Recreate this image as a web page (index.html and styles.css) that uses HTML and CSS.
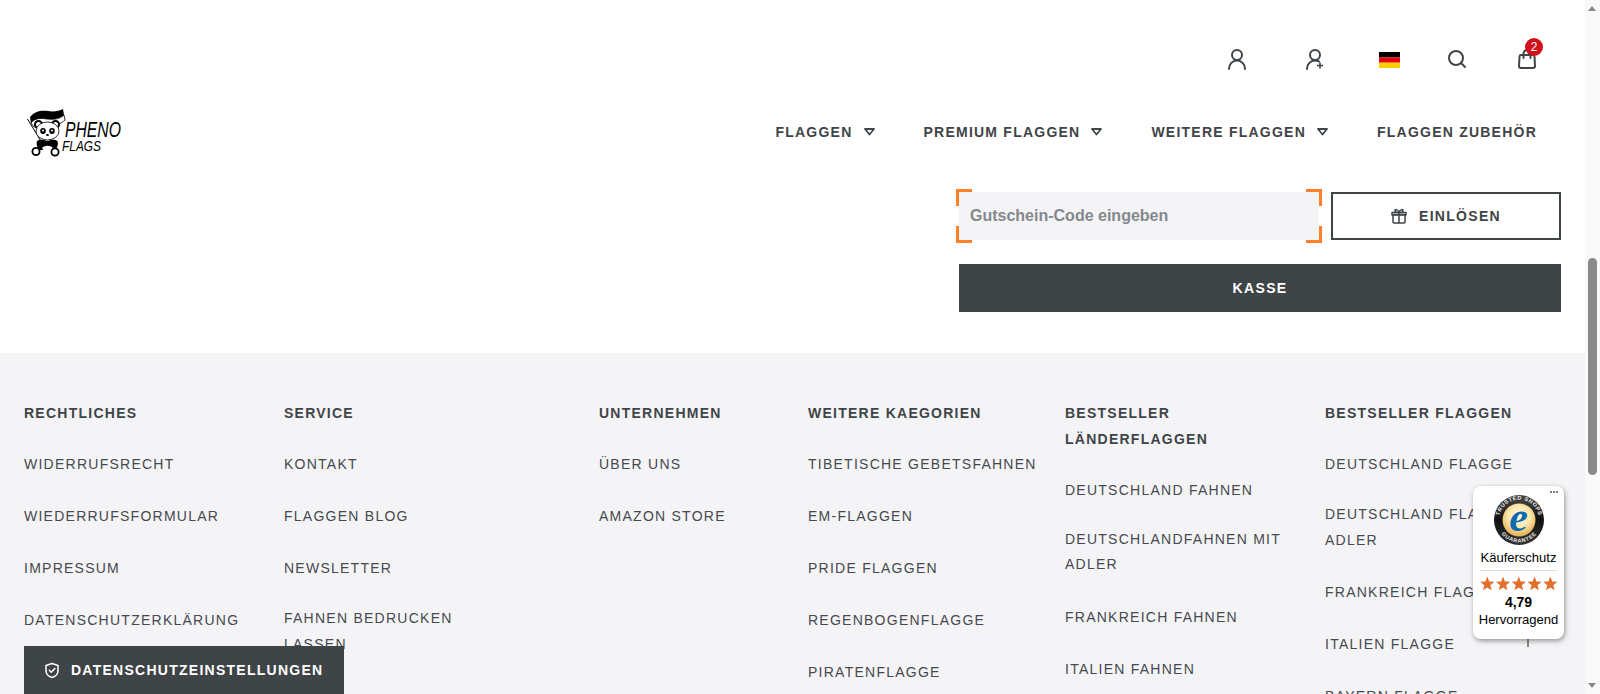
FILE: index.html
```html
<!DOCTYPE html>
<html lang="de">
<head>
<meta charset="utf-8">
<title>Warenkorb – Pheno Flags</title>
<link rel="stylesheet" href="styles.css">
</head>
<body>
<div class="app">
  <div class="page">
    <header class="header">
      <div class="toolbar">
        <a class="tool t1"><svg width="18" height="20" viewBox="0 0 18 20" class="ico"><circle cx="9" cy="6" r="5"/><path d="M1 20c0-5 3.500-8.500 8-8.500s8 3.500 8 8.500"/></svg></a>
        <a class="tool t2"><svg width="18" height="20" viewBox="0 0 18 20" class="ico"><circle cx="9" cy="6" r="5"/><path d="M1 20c0-5 3.500-8.500 8-8.500 1.500 0 2.800.4 4 1"/><path d="M14 13.500v6M11 16.500h6" class="thin"/></svg></a>
        <a class="tool t3"><svg width="21" height="16" viewBox="0 0 21 16" class="flag"><rect width="21" height="5.400" fill="#000"/><rect y="5.300" width="21" height="5.400" fill="#e30613"/><rect y="10.700" width="21" height="5.300" fill="#ffce00"/></svg></a>
        <a class="tool t4"><svg width="18" height="18" viewBox="0 0 18 18" class="ico"><circle cx="8" cy="8" r="7"/><path d="M13 13l4 4"/></svg></a>
        <a class="tool t5"><svg width="18" height="20" viewBox="0 0 18 20" class="ico"><path d="M3 6h12c1 0 1.400.6 1.500 1.500l.5 9.500c0 1.300-.7 2-2 2H3c-1.300 0-2-.7-2-2l.5-9.500C1.600 6.600 2 6 3 6z"/><path d="M5.500 9V5c0-2.300 1.400-4 3.500-4s3.500 1.700 3.500 4v4"/></svg><span class="badge">2</span></a>
      </div>
      <div class="navrow">
        <a class="logo">
          <svg width="94" height="50" viewBox="27 108 94 50">
            <path d="M30 117c5-6 11-7 18-6 6 1 11 0 15-2l1 6c-4 4-10 5-17 4-7-1-12 0-16 5z" fill="#000"/>
            <path d="M31 123c4-5 9-5 16-4 7 1 13 0 17-4l1 5c-4 4-9 5-15 5l-16 2z" fill="#fff" stroke="#000" stroke-width=".8"/>
            <path d="M27.500 119l14 23" stroke="#000" stroke-width="1"/>
            <circle cx="38.500" cy="124.500" r="3.500" fill="#fff" stroke="#000" stroke-width="2"/>
            <circle cx="55.500" cy="124.500" r="3.500" fill="#fff" stroke="#000" stroke-width="2"/>
            <ellipse cx="47.500" cy="131" rx="11.500" ry="9" fill="#fff" stroke="#000" stroke-width=".8"/>
            <ellipse cx="43" cy="131" rx="2.800" ry="3" fill="#000"/>
            <ellipse cx="52" cy="131" rx="2.800" ry="3" fill="#000"/>
            <circle cx="43" cy="130.500" r="1" fill="#fff"/>
            <circle cx="52" cy="130.500" r="1" fill="#fff"/>
            <ellipse cx="47.500" cy="135" rx="1.500" ry="1" fill="#000"/>
            <path d="M37 141c3-2 6-1 10.500 0 4-1 7-2 10 0 1 3 0 7-3 9H40c-3-2-4-6-3-9z" fill="#000"/>
            <path d="M42 148c3-3 8-3 11 0l-2 3h-7z" fill="#fff"/>
            <circle cx="36" cy="151.500" r="3.600" fill="#fff" stroke="#000" stroke-width="1.800"/>
            <circle cx="55" cy="152" r="3.600" fill="#fff" stroke="#000" stroke-width="1.800"/>
            <text x="65" y="137" class="logo-a" textLength="56" lengthAdjust="spacingAndGlyphs">PHENO</text>
            <text x="62" y="151" class="logo-b" textLength="39" lengthAdjust="spacingAndGlyphs">FLAGS</text>
          </svg>
        </a>
        <nav class="nav">
          <a class="navlink">FLAGGEN<svg class="caret" width="11" height="8" viewBox="0 0 11 8"><path d="M1 1h9L5.500 6.500z"/></svg></a>
          <a class="navlink">PREMIUM FLAGGEN<svg class="caret" width="11" height="8" viewBox="0 0 11 8"><path d="M1 1h9L5.500 6.500z"/></svg></a>
          <a class="navlink">WEITERE FLAGGEN<svg class="caret" width="11" height="8" viewBox="0 0 11 8"><path d="M1 1h9L5.500 6.500z"/></svg></a>
          <a class="navlink">FLAGGEN ZUBEHÖR</a>
        </nav>
      </div>
    </header>

    <main class="cart">
      <div class="cart-actions">
        <div class="coupon">
          <div class="coupon-field">
            <span class="corner tl"></span><span class="corner tr"></span><span class="corner bl"></span><span class="corner br"></span>
            <input class="coupon-input" type="text" placeholder="Gutschein-Code eingeben">
          </div>
          <button class="btn-outline" type="button">
            <svg width="16" height="16" viewBox="0 0 16 16" class="gift"><rect x="2" y="6.500" width="12" height="8.500" rx="1"/><path d="M1 4.500h14v2.500H1zM8 4.500V15M8 4.500C6 4.500 4 3.800 4 2.500S6.500.8 8 4.500c1.500-3.700 4-3.300 4-2s-2 2-4 2"/></svg>
            EINLÖSEN
          </button>
        </div>
        <button class="btn-solid" type="button">KASSE</button>
      </div>
    </main>

    <footer class="footer">
      <section class="col">
        <h4 class="col-title">RECHTLICHES</h4>
        <ul class="links">
          <li>WIDERRUFSRECHT</li>
          <li>WIEDERRUFSFORMULAR</li>
          <li>IMPRESSUM</li>
          <li>DATENSCHUTZERKLÄRUNG</li>
        </ul>
      </section>
      <section class="col">
        <h4 class="col-title">SERVICE</h4>
        <ul class="links narrow">
          <li>KONTAKT</li>
          <li>FLAGGEN BLOG</li>
          <li>NEWSLETTER</li>
          <li class="wrap">FAHNEN BEDRUCKEN LASSEN</li>
        </ul>
      </section>
      <section class="col">
        <h4 class="col-title">UNTERNEHMEN</h4>
        <ul class="links">
          <li>ÜBER UNS</li>
          <li>AMAZON STORE</li>
        </ul>
      </section>
      <section class="col">
        <h4 class="col-title">WEITERE KAEGORIEN</h4>
        <ul class="links">
          <li>TIBETISCHE GEBETSFAHNEN</li>
          <li>EM-FLAGGEN</li>
          <li>PRIDE FLAGGEN</li>
          <li>REGENBOGENFLAGGE</li>
          <li>PIRATENFLAGGE</li>
        </ul>
      </section>
      <section class="col">
        <h4 class="col-title">BESTSELLER<br>LÄNDERFLAGGEN</h4>
        <ul class="links">
          <li>DEUTSCHLAND FAHNEN</li>
          <li class="wrap tight">DEUTSCHLANDFAHNEN MIT ADLER</li>
          <li>FRANKREICH FAHNEN</li>
          <li>ITALIEN FAHNEN</li>
        </ul>
      </section>
      <section class="col">
        <h4 class="col-title">BESTSELLER FLAGGEN</h4>
        <ul class="links">
          <li>DEUTSCHLAND FLAGGE</li>
          <li class="wrap">DEUTSCHLAND FLAGGE<br>ADLER</li>
          <li>FRANKREICH FLAGGE</li>
          <li>ITALIEN FLAGGE</li>
          <li>BAYERN FLAGGE</li>
        </ul>
      </section>
    </footer>

    <a class="privacy">
      <svg width="16" height="17" viewBox="0 0 16 17" class="shield"><path d="M8 1.500l6 2v5c0 3.500-2.500 6-6 7-3.500-1-6-3.500-6-7v-5z"/><path d="M5.300 8.300l2 2 3.500-3.800"/></svg>
      DATENSCHUTZEINSTELLUNGEN
    </a>

    <span class="stem"></span>

    <aside class="trust">
      <span class="dots"><i></i><i></i><i></i></span>
      <svg class="seal" width="50" height="50" viewBox="0 0 50 50">
        <defs>
          <radialGradient id="gold" cx="50%" cy="40%" r="60%">
            <stop offset="0" stop-color="#fffbe8"/>
            <stop offset=".6" stop-color="#fbe3a6"/>
            <stop offset="1" stop-color="#e2ab4e"/>
          </radialGradient>
          <linearGradient id="ring" x1="0" y1="0" x2="0" y2="1">
            <stop offset="0" stop-color="#4a4a4a"/>
            <stop offset=".5" stop-color="#111"/>
            <stop offset="1" stop-color="#333"/>
          </linearGradient>
          <path id="arcTop" d="M6 31a20 20 0 1 1 38 0"/>
          <path id="arcBottom" d="M3 30a22.600 22.600 0 0 0 44 0"/>
        </defs>
        <circle cx="25" cy="25" r="25" fill="url(#ring)"/>
        <circle cx="25" cy="25" r="16.500" fill="url(#gold)"/>
        <text class="seal-t"><textPath href="#arcTop" startOffset="50%" text-anchor="middle">TRUSTED SHOPS</textPath></text>
        <text class="seal-t"><textPath href="#arcBottom" startOffset="50%" text-anchor="middle">GUARANTEE</textPath></text>
        <text x="24.500" y="36" class="seal-e" text-anchor="middle">e</text>
      </svg>
      <div class="trust-label">Käuferschutz</div>
      <div class="trust-stars">
        <svg width="78" height="15" viewBox="0 0 69.600 13.400"><path id="s" d="M6.500.5l1.700 4.400 4.600.3-3.600 3 1.200 4.600-3.900-2.600-3.900 2.600 1.200-4.600L.2 5.200l4.600-.3z"/><use href="#s" x="14.060"/><use href="#s" x="28.120"/><use href="#s" x="42.180"/><use href="#s" x="56.240"/></svg>
      </div>
      <div class="trust-score">4,79</div>
      <div class="trust-word">Hervorragend</div>
    </aside>
  </div>

  <div class="scrollbar">
    <span class="arrow up"></span>
    <span class="thumb"></span>
    <span class="arrow down"></span>
  </div>
</div>
</body>
</html>
```
FILE: styles.css
```css
* { box-sizing: border-box; }
html, body { margin: 0; padding: 0; height: 100%; overflow: hidden; background: #fff; }
body { font-family: "Liberation Sans", Arial, sans-serif; color: #3f4447; }

.app { display: flex; width: 1600px; height: 694px; }
.page { position: relative; flex: 1; height: 694px; overflow: hidden; background: #fff; }

/* Header */
.header { height: 192px; padding-top: 39px; }
.toolbar {
  display: grid;
  grid-template-columns: 78px 78px 71px 64px 76px;
  justify-content: end;
  padding-right: 20px;
  height: 40px;
  align-items: center;
}
.tool { position: relative; display: flex; justify-content: center; align-items: center; }
.t3 { margin-top: 2px; }
.ico { fill: none; stroke: #3f4447; stroke-width: 2; stroke-linecap: round; stroke-linejoin: round; overflow: visible; }
.ico .thin { stroke-width: 1.6; stroke-linecap: butt; }
.badge {
  position: absolute;
  left: 36px;
  top: -11px;
  width: 18px;
  height: 18px;
  border-radius: 50%;
  background: #d0101a;
  color: #fff;
  font-size: 12px;
  line-height: 18px;
  text-align: center;
}
.navrow {
  display: flex;
  justify-content: space-between;
  align-items: center;
  height: 50px;
  margin-top: 28px;
  padding: 0 48px 0 27px;
}
.logo { display: block; height: 50px; margin-top: 2px; }
.logo svg { display: block; }
.logo-a { font-family: "Liberation Sans", sans-serif; font-style: italic; font-size: 22px; fill: #000; }
.logo-b { font-family: "Liberation Sans", sans-serif; font-style: italic; font-size: 15px; fill: #000; }
.nav { display: flex; gap: 49px; }
.navlink {
  display: flex;
  align-items: center;
  font-size: 14px;
  font-weight: 700;
  letter-spacing: 1.230px;
  line-height: 20px;
  color: #3f4447;
}
.caret { margin-left: 11px; fill: none; stroke: #3f4447; stroke-width: 1.800; stroke-linejoin: round; }

/* Cart actions */
.cart { height: 161px; display: flex; justify-content: flex-end; padding-right: 24px; }
.cart-actions { width: 602px; display: flex; flex-direction: column; gap: 24px; }
.coupon { display: flex; gap: 12px; height: 48px; }
.coupon-field { position: relative; width: 360px; height: 48px; }
.coupon-input {
  display: block;
  width: 100%;
  height: 100%;
  padding: 0 11px;
  border: 0;
  outline: 0;
  background: #f4f4f7;
  font: 700 16px "Liberation Sans", Arial, sans-serif;
  color: #3f4447;
}
.coupon-input::placeholder { color: #85888c; opacity: 1; }
.corner { position: absolute; width: 16px; height: 17px; border: 0 solid #ff7f2a; }
.tl { left: -3px; top: -3px; border-width: 3px 0 0 3px; }
.tr { right: -3px; top: -3px; border-width: 3px 3px 0 0; }
.bl { left: -3px; bottom: -3px; border-width: 0 0 3px 3px; }
.br { right: -3px; bottom: -3px; border-width: 0 3px 3px 0; }
.btn-outline {
  flex: 1;
  display: flex;
  align-items: center;
  justify-content: center;
  gap: 12px;
  border: 2px solid #3f4447;
  background: #fff;
  color: #3f4447;
  font: 700 14px "Liberation Sans", Arial, sans-serif;
  letter-spacing: 1.300px;
}
.gift { fill: none; stroke: #3f4447; stroke-width: 1.500; stroke-linejoin: round; }
.btn-solid {
  height: 48px;
  border: 0;
  background: #3f4447;
  color: #fff;
  font: 700 14px "Liberation Sans", Arial, sans-serif;
  letter-spacing: 1.400px;
}

/* Footer */
.footer {
  display: grid;
  grid-template-columns: 260px 315px 209px 257px 260px 236px;
  height: 341px;
  padding: 47px 0 0 24px;
  background: #f4f4f7;
  overflow: hidden;
}
.col-title {
  margin: 0 0 24.600px;
  font-size: 14px;
  font-weight: 700;
  line-height: 26px;
  letter-spacing: 1.250px;
  color: #3f4447;
}
.links { display: flex; flex-direction: column; gap: 26px; margin: 0; padding: 0; list-style: none; }
.links li { font-size: 14px; line-height: 26px; letter-spacing: 1.250px; color: #46494d; }
.links li.wrap { margin-top: -2px; }
.links li.tight { line-height: 25.600px; }
.links.narrow { max-width: 200px; }

/* Overlays */
.privacy {
  position: absolute;
  left: 24px;
  bottom: 0;
  display: flex;
  align-items: center;
  gap: 11px;
  width: 320px;
  height: 48px;
  padding-left: 20px;
  background: #3f4447;
  color: #fff;
  font-size: 14px;
  font-weight: 700;
  letter-spacing: 1.260px;
}
.shield { fill: none; stroke: #fff; stroke-width: 1.500; stroke-linecap: round; stroke-linejoin: round; }
.stem { position: absolute; left: 1527px; top: 639px; width: 2px; height: 8px; background: #8c8c8c; }
.trust {
  position: absolute;
  left: 1473px;
  top: 486px;
  width: 91px;
  height: 153px;
  padding-top: 9px;
  border-radius: 8px;
  background: #fff;
  box-shadow: 1px 2px 5px rgba(0, 0, 0, .4);
  color: #000;
  text-align: center;
}
.dots { position: absolute; right: 6px; top: 5px; display: flex; gap: 1px; }
.dots i { width: 2px; height: 2px; border-radius: 50%; background: #555; }
.seal { display: block; margin: 0 auto; }
.seal-t { font-size: 5.500px; font-weight: 700; letter-spacing: .6px; fill: #eee; }
.seal-e { font-family: "Liberation Serif", serif; font-style: italic; font-weight: 700; font-size: 42px; fill: #0d6aad; }
.trust-label { margin: 5px 7px 0; padding-bottom: 5px; border-bottom: 1px solid #ddd; font-size: 13px; line-height: 15px; }
.trust-stars { height: 15px; margin-top: 5px; display: flex; justify-content: center; line-height: 0; }
.trust-stars svg { fill: #e2702a; }
.trust-score { margin-top: 2px; font-size: 14px; font-weight: 700; line-height: 18px; }
.trust-word { font-size: 13px; line-height: 18px; }

/* Scrollbar */
.scrollbar { position: relative; width: 15px; height: 694px; background: #f9f9f9; }
.arrow { position: absolute; left: 3px; width: 0; height: 0; border-left: 4.500px solid transparent; border-right: 4.500px solid transparent; }
.arrow.up { top: 6px; border-bottom: 5px solid #8a8a8a; }
.arrow.down { bottom: 6px; border-top: 5px solid #8a8a8a; }
.thumb { position: absolute; left: 3px; top: 258px; width: 9px; height: 217px; border-radius: 5px; background: #8a8a8a; }
```
